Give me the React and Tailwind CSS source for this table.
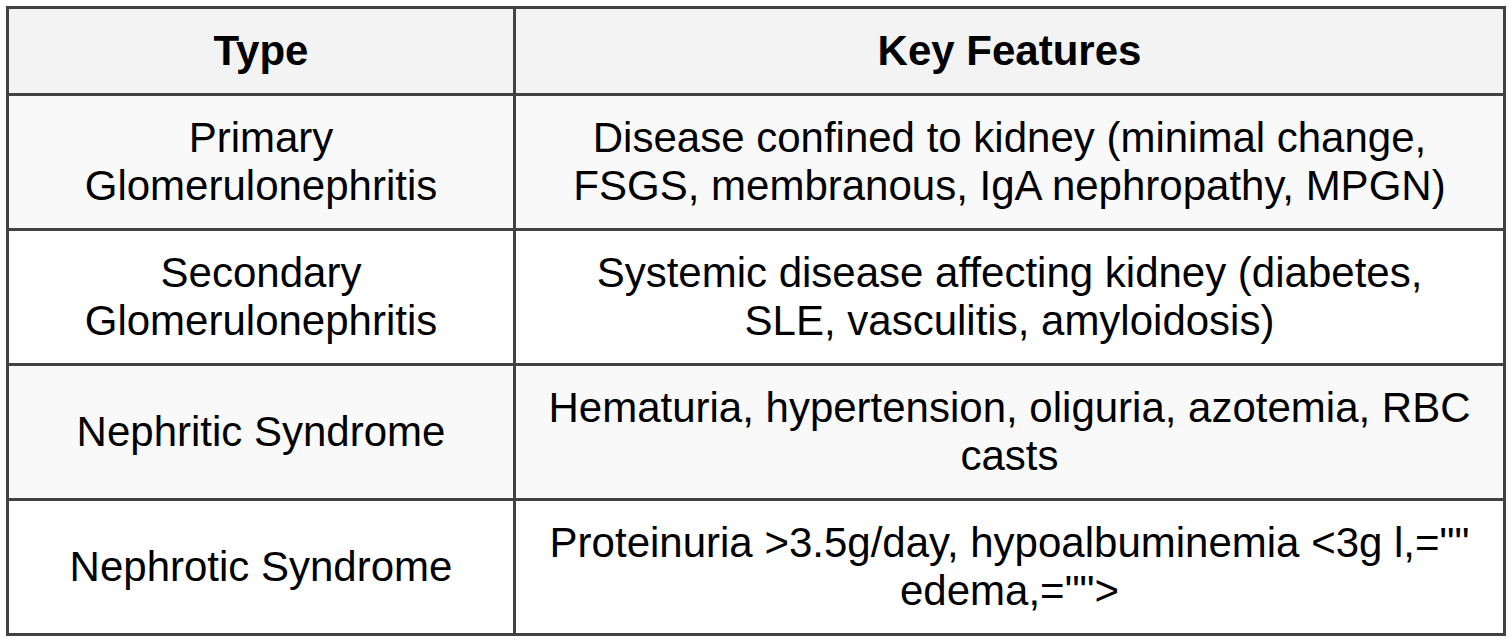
import React from 'react';

const rows = [
  {
    type: ["Primary", "Glomerulonephritis"],
    features: ["Disease confined to kidney (minimal change,", "FSGS, membranous, IgA nephropathy, MPGN)"],
  },
  {
    type: ["Secondary", "Glomerulonephritis"],
    features: ["Systemic disease affecting kidney (diabetes,", "SLE, vasculitis, amyloidosis)"],
  },
  {
    type: ["Nephritic Syndrome"],
    features: ["Hematuria, hypertension, oliguria, azotemia, RBC", "casts"],
  },
  {
    type: ["Nephrotic Syndrome"],
    features: ['Proteinuria >3.5g/day, hypoalbuminemia <3g l,=""', 'edema,="">'],
  },
];

const Lines = ({ lines }) =>
  lines.map((line, i) => (
    <span key={i} className="block whitespace-nowrap">
      {line}
    </span>
  ));

const App = () => {
  return (
    <div className="bg-white p-[6px] font-['Liberation_Sans',Arial,sans-serif] text-black">
      <table className="w-[1500px] border-collapse border-[3px] border-[#424242] text-[42px] leading-[48px]">
        <thead>
          <tr className="bg-[#f3f3f3]">
            <th className="w-[507px] border-[3px] border-[#424242] px-3 py-[18px] text-center font-bold">Type</th>
            <th className="border-[3px] border-[#424242] px-3 py-[18px] text-center font-bold">Key Features</th>
          </tr>
        </thead>
        <tbody>
          {rows.map((row, i) => (
            <tr key={row.type.join(" ")} className={i % 2 === 0 ? "bg-[#f9f9f9]" : "bg-white"}>
              <td className="border-[3px] border-[#424242] px-3 py-[18px] text-center">
                <Lines lines={row.type} />
              </td>
              <td className="border-[3px] border-[#424242] px-3 py-[18px] text-center">
                <Lines lines={row.features} />
              </td>
            </tr>
          ))}
        </tbody>
      </table>
    </div>
  );
};

export default App;
